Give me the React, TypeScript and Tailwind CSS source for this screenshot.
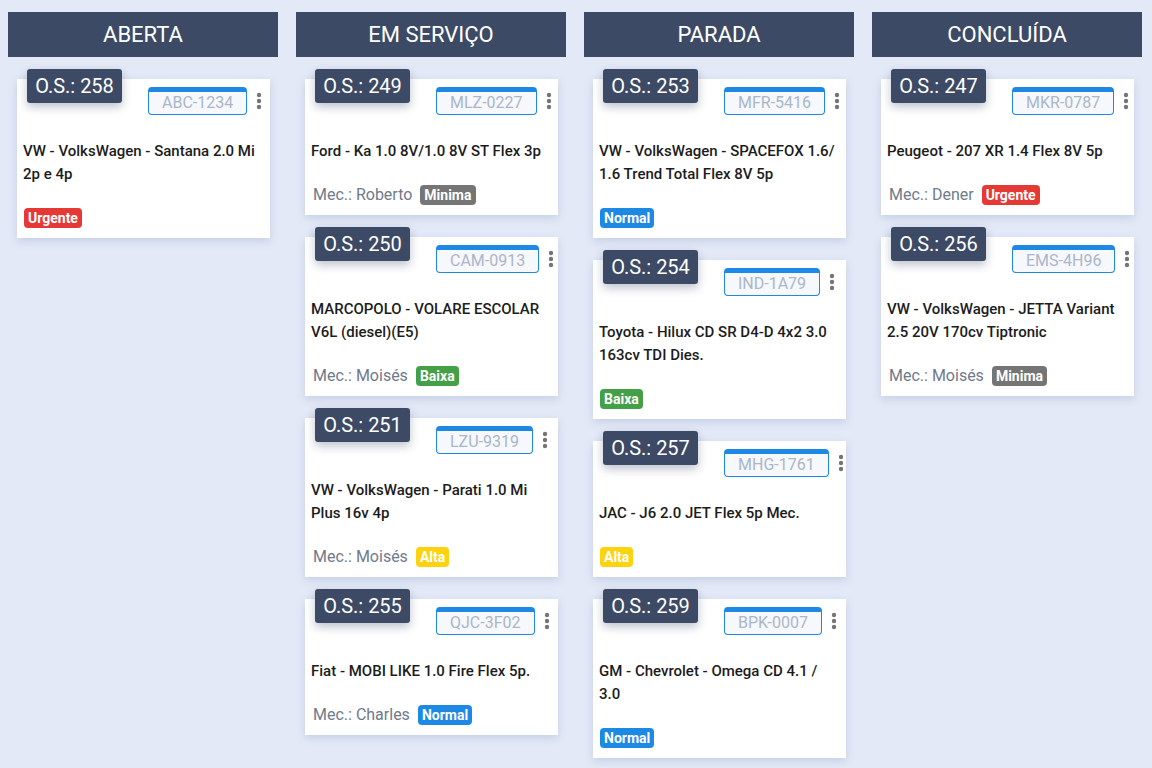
import React from "react";

type Priority = "Urgente" | "Minima" | "Baixa" | "Alta" | "Normal";

interface Order {
  os: number;
  plate: string;
  vehicle: React.ReactNode;
  mechanic?: string;
  priority: Priority;
}

interface Column {
  title: string;
  orders: Order[];
}

const priorityClass: Record<Priority, string> = {
  Urgente: "bg-[#e53935]",
  Minima: "bg-[#757575]",
  Baixa: "bg-[#43a047]",
  Alta: "bg-[#fdd20e]",
  Normal: "bg-[#1e88e5]",
};

const columns: Column[] = [
  {
    title: "ABERTA",
    orders: [
      {
        os: 258,
        plate: "ABC-1234",
        vehicle: "VW - VolksWagen - Santana 2.0 Mi 2p e 4p",
        priority: "Urgente",
      },
    ],
  },
  {
    title: "EM SERVIÇO",
    orders: [
      {
        os: 249,
        plate: "MLZ-0227",
        vehicle: "Ford - Ka 1.0 8V/1.0 8V ST Flex 3p",
        mechanic: "Roberto",
        priority: "Minima",
      },
      {
        os: 250,
        plate: "CAM-0913",
        vehicle: "MARCOPOLO - VOLARE ESCOLAR V6L (diesel)(E5)",
        mechanic: "Moisés",
        priority: "Baixa",
      },
      {
        os: 251,
        plate: "LZU-9319",
        vehicle: "VW - VolksWagen - Parati 1.0 Mi Plus 16v 4p",
        mechanic: "Moisés",
        priority: "Alta",
      },
      {
        os: 255,
        plate: "QJC-3F02",
        vehicle: "Fiat - MOBI LIKE 1.0 Fire Flex 5p.",
        mechanic: "Charles",
        priority: "Normal",
      },
    ],
  },
  {
    title: "PARADA",
    orders: [
      {
        os: 253,
        plate: "MFR-5416",
        vehicle: (
          <>
            VW - VolksWagen - SPACEFOX 1.6/
            <wbr />
            1.6 Trend Total Flex 8V 5p
          </>
        ),
        priority: "Normal",
      },
      {
        os: 254,
        plate: "IND-1A79",
        vehicle: "Toyota - Hilux CD SR D4-D 4x2 3.0 163cv TDI Dies.",
        priority: "Baixa",
      },
      {
        os: 257,
        plate: "MHG-1761",
        vehicle: "JAC - J6 2.0 JET Flex 5p Mec.",
        priority: "Alta",
      },
      {
        os: 259,
        plate: "BPK-0007",
        vehicle: "GM - Chevrolet - Omega CD 4.1 / 3.0",
        priority: "Normal",
      },
    ],
  },
  {
    title: "CONCLUÍDA",
    orders: [
      {
        os: 247,
        plate: "MKR-0787",
        vehicle: "Peugeot - 207 XR 1.4 Flex 8V 5p",
        mechanic: "Dener",
        priority: "Urgente",
      },
      {
        os: 256,
        plate: "EMS-4H96",
        vehicle: "VW - VolksWagen - JETTA Variant 2.5 20V 170cv Tiptronic",
        mechanic: "Moisés",
        priority: "Minima",
      },
    ],
  },
];

function Dots() {
  return (
    <svg width="6" height="18" viewBox="0 0 6 18" className="text-[#757575]">
      <circle cx="3" cy="3" r="2.2" fill="currentColor" />
      <circle cx="3" cy="9" r="2.2" fill="currentColor" />
      <circle cx="3" cy="15" r="2.2" fill="currentColor" />
    </svg>
  );
}

function OrderCard({ order }: { order: Order }) {
  return (
    <div className="flex flex-col bg-white shadow-[0_3px_8px_rgba(120,140,190,0.28)]">
      {/* Header: O.S. tag, plate and menu */}
      <div className="flex items-start h-[61px]">
        <div className="-mt-[10px] ml-[10px] flex h-[34px] w-[95px] items-center justify-center rounded-[3px] bg-[#3d4a65] text-[20px] text-white shadow-[0_4px_10px_rgba(40,55,90,0.3)]">
          O.S.: {order.os}
        </div>
        <div className="ml-[26px] mt-[8px] flex h-[28px] items-center rounded-[4px] border border-t-[5px] border-[#1e88e5] bg-[#f6f8fb] px-[13px] text-[16px] leading-none text-[#aab6ca]">
          {order.plate}
        </div>
        <div className="ml-[9px] mt-[13px]">
          <Dots />
        </div>
      </div>

      {/* Vehicle */}
      <p className="px-[6px] text-[15px] font-medium leading-[23px] text-[#1c1c1c]">
        {order.vehicle}
      </p>

      {/* Mechanic + priority */}
      <div className="mt-[21px] mb-[9px] flex h-[22px] items-center pl-[7px]">
        {order.mechanic && (
          <span className="ml-[1px] mr-[8px] text-[16px] text-[#6f7a8a]">
            Mec.: {order.mechanic}
          </span>
        )}
        <span
          className={`${priorityClass[order.priority]} rounded-[4px] px-[4px] text-[14px] font-bold leading-[20px] text-white`}
        >
          {order.priority}
        </span>
      </div>
    </div>
  );
}

export default function App() {
  return (
    <div className="min-h-screen bg-[#e3e9f6] pl-[8px] pt-[12px] font-['Roboto','Liberation_Sans',sans-serif]">
      <div className="flex gap-[18px]">
        {columns.map((col) => (
          <div key={col.title} className="w-[270px] shrink-0">
            <div className="flex h-[45px] items-center justify-center bg-[#3d4a65] text-[22px] text-white">
              {col.title}
            </div>
            <div className="flex flex-col gap-[22px] pl-[9px] pr-[8px] pt-[22px]">
              {col.orders.map((o) => (
                <OrderCard key={o.os} order={o} />
              ))}
            </div>
          </div>
        ))}
      </div>
    </div>
  );
}
